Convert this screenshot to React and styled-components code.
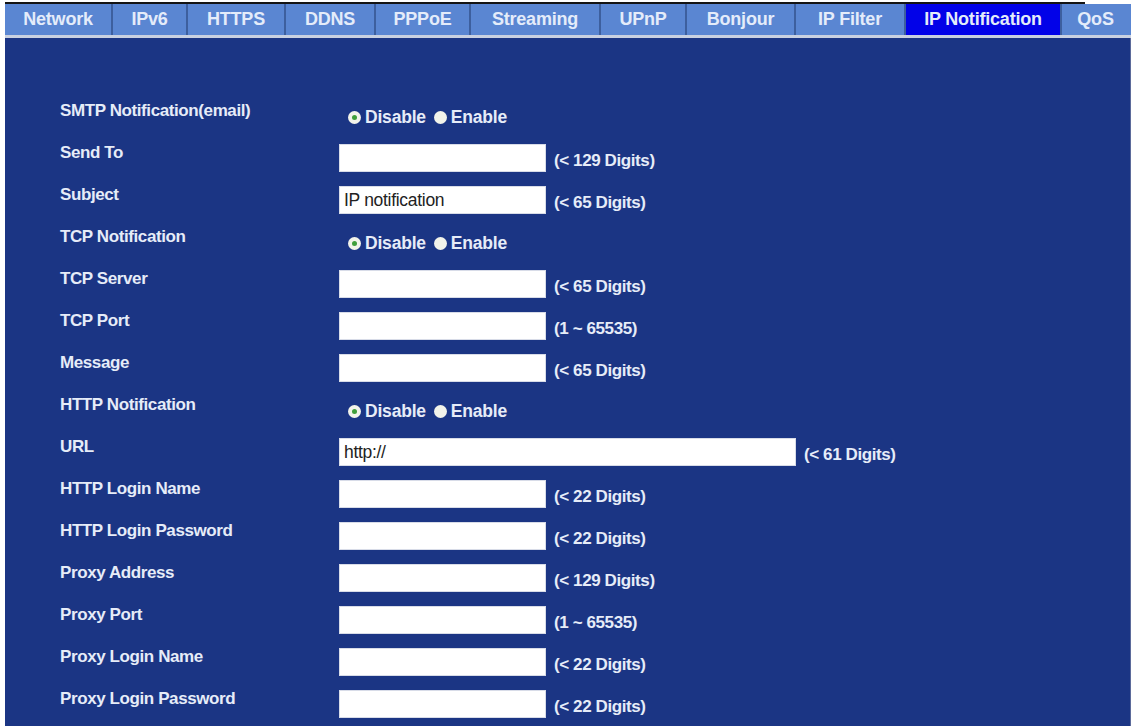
import React, { useState } from "react";
import styled, { createGlobalStyle } from "styled-components";

const GlobalStyle = createGlobalStyle`
  html, body {
    margin: 0;
    padding: 0;
    background: #ffffff;
  }
  body {
    font-family: "Liberation Sans", Arial, sans-serif;
  }
`;

const Page = styled.div`
  width: 1126px;
  height: 726px;
  margin-left: 5px;
  display: flex;
  flex-direction: column;
  overflow: hidden;
`;

const TopRule = styled.div`
  width: 1085px;
  height: 2px;
  margin-top: 2px;
  margin-left: -5px;
  background: #141414;
`;

const TabBar = styled.div`
  display: flex;
  height: 31px;
  background: #5a86d2;
`;

const Tab = styled.div`
  flex: 0 0 ${(p) => p.w}px;
  box-sizing: border-box;
  display: flex;
  align-items: center;
  justify-content: center;
  border-right: 2px solid ${(p) => (p.last ? "#5a86d2" : "#3d5f9e")};
  background: ${(p) => (p.active ? "#0202e8" : "#5a86d2")};
  color: #e4ecfa;
  font-size: 18px;
  font-weight: bold;
  letter-spacing: -0.2px;
  cursor: pointer;
`;

const TabRule = styled.div`
  height: 3px;
  background: #c9d1e1;
`;

const Panel = styled.div`
  flex: 1;
  background: #1b3584;
  padding: 57px 0 0 55px;
  border-right: 1px solid #5b6a9a;
`;

const Row = styled.div`
  display: grid;
  grid-template-columns: 279px auto;
  align-items: center;
  height: 42px;
`;

const Label = styled.div`
  color: #e6ecf8;
  font-size: 17px;
  font-weight: bold;
  letter-spacing: -0.4px;
  padding-bottom: 11px;
`;

const Field = styled.div`
  display: flex;
  align-items: center;
  gap: 8px;
`;

const TextBox = styled.input`
  box-sizing: border-box;
  width: ${(p) => p.w}px;
  height: 28px;
  border: 1px solid #d8dce8;
  background: #ffffff;
  outline: none;
  padding: 0 4px;
  font-family: "Liberation Sans", Arial, sans-serif;
  font-size: 17.5px;
  letter-spacing: -0.3px;
  color: #222222;
`;

const Hint = styled.span`
  color: #e6ecf8;
  font-size: 17px;
  font-weight: bold;
  letter-spacing: -0.4px;
  padding-top: 6px;
`;

const RadioGroup = styled.div`
  display: flex;
  align-items: center;
  padding-left: 9px;
  padding-top: 2px;
`;

const RadioOption = styled.label`
  display: flex;
  align-items: center;
  gap: 4px;
  margin-right: 8px;
  color: #e6ecf8;
  font-size: 17.5px;
  font-weight: bold;
  letter-spacing: -0.2px;
  cursor: pointer;
`;

const Dot = styled.span`
  width: 13px;
  height: 13px;
  border-radius: 50%;
  background: #f2f3ea;
  display: flex;
  align-items: center;
  justify-content: center;
  &::after {
    content: "";
    width: 5px;
    height: 5px;
    border-radius: 50%;
    background: ${(p) => (p.on ? "#3f9e3a" : "transparent")};
  }
`;

const tabs = [
  ["Network", 108],
  ["IPv6", 75],
  ["HTTPS", 98],
  ["DDNS", 90],
  ["PPPoE", 95],
  ["Streaming", 130],
  ["UPnP", 86],
  ["Bonjour", 109],
  ["IP Filter", 110],
  ["IP Notification", 156],
  ["QoS", 69],
];

const rows = [
  { label: "SMTP Notification(email)", radio: true },
  { label: "Send To", hint: "(< 129 Digits)" },
  { label: "Subject", hint: "(< 65 Digits)", value: "IP notification" },
  { label: "TCP Notification", radio: true },
  { label: "TCP Server", hint: "(< 65 Digits)" },
  { label: "TCP Port", hint: "(1 ~ 65535)" },
  { label: "Message", hint: "(< 65 Digits)" },
  { label: "HTTP Notification", radio: true },
  { label: "URL", hint: "(< 61 Digits)", value: "http://", w: 457 },
  { label: "HTTP Login Name", hint: "(< 22 Digits)" },
  { label: "HTTP Login Password", hint: "(< 22 Digits)" },
  { label: "Proxy Address", hint: "(< 129 Digits)" },
  { label: "Proxy Port", hint: "(1 ~ 65535)" },
  { label: "Proxy Login Name", hint: "(< 22 Digits)" },
  { label: "Proxy Login Password", hint: "(< 22 Digits)" },
];

const Toggle = () => {
  const [on, setOn] = useState(false);
  return (
    <RadioGroup>
      <RadioOption onClick={() => setOn(false)}>
        <Dot on={!on} />
        Disable
      </RadioOption>
      <RadioOption onClick={() => setOn(true)}>
        <Dot on={on} />
        Enable
      </RadioOption>
    </RadioGroup>
  );
};

export default function App() {
  return (
    <Page>
      <GlobalStyle />
      <TopRule />
      <TabBar>
        {tabs.map(([name, w], i) => (
          <Tab
            key={name}
            w={w}
            active={name === "IP Notification"}
            last={i === tabs.length - 1}
          >
            {name}
          </Tab>
        ))}
      </TabBar>
      <TabRule />
      <Panel>
        {rows.map((row) => (
          <Row key={row.label}>
            <Label>{row.label}</Label>
            {row.radio ? (
              <Toggle />
            ) : (
              <Field>
                <TextBox w={row.w || 207} defaultValue={row.value || ""} />
                <Hint>{row.hint}</Hint>
              </Field>
            )}
          </Row>
        ))}
      </Panel>
    </Page>
  );
}
